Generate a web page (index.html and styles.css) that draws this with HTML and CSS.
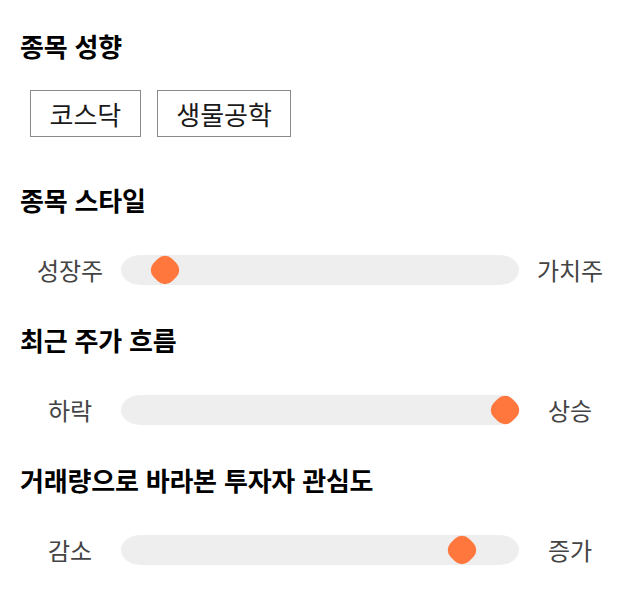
FILE: index.html
```html
<!DOCTYPE html>
<html lang="ko">
<head>
<meta charset="utf-8">
<title>종목 성향</title>
<link rel="stylesheet" href="styles.css">
</head>
<body>
<div class="panel">
  <section class="group">
    <h2 class="title title-tags">종목 성향</h2>
    <div class="tags">
      <span class="tag">코스닥</span>
      <span class="tag">생물공학</span>
    </div>
  </section>

  <section class="group group-gap-lg">
    <h2 class="title">종목 스타일</h2>
    <div class="slider-row">
      <span class="label">성장주</span>
      <div class="track"><span class="thumb" style="--v:0.079"></span></div>
      <span class="label">가치주</span>
    </div>
  </section>

  <section class="group">
    <h2 class="title">최근 주가 흐름</h2>
    <div class="slider-row">
      <span class="label">하락</span>
      <div class="track"><span class="thumb" style="--v:1"></span></div>
      <span class="label">상승</span>
    </div>
  </section>

  <section class="group">
    <h2 class="title">거래량으로 바라본 투자자 관심도</h2>
    <div class="slider-row">
      <span class="label">감소</span>
      <div class="track"><span class="thumb" style="--v:0.885"></span></div>
      <span class="label">증가</span>
    </div>
  </section>
</div>
</body>
</html>
```

FILE: styles.css
```css
* { box-sizing: border-box; }

html, body {
  margin: 0;
  padding: 0;
  background: #ffffff;
}

body {
  font-family: "Noto Sans CJK KR", "Noto Sans", sans-serif;
  color: #111111;
}

.panel {
  padding: 29px 0 0 0;
  display: flex;
  flex-direction: column;
}

.group {
  display: flex;
  flex-direction: column;
  margin-top: 38px;
}

.group:first-child {
  margin-top: 0;
}

.group-gap-lg {
  margin-top: 46px;
}

.title {
  margin: 0 0 38px 0;
  padding-left: 20px;
  font-size: 26px;
  line-height: 34px;
  font-weight: 700;
  color: #000000;
  letter-spacing: -0.2px;
}

.title-tags {
  margin-bottom: 27px;
}

.tags {
  display: flex;
  gap: 16px;
  padding-left: 30px;
}

.tag {
  display: inline-block;
  height: 47px;
  line-height: 45px;
  padding: 0 18.5px;
  border: 1px solid #8a8a8a;
  font-size: 26px;
  color: #1a1a1a;
}

.slider-row {
  display: flex;
  align-items: center;
  gap: 11px;
  padding: 0 30px;
  height: 30px;
}

.label {
  width: 80px;
  flex: 0 0 80px;
  text-align: center;
  font-size: 24px;
  line-height: 30px;
  color: #444444;
}

.track {
  position: relative;
  flex: 1 1 auto;
  height: 30px;
  background: #eeeeee;
  border-radius: 19px / 15px;
}

.thumb {
  position: absolute;
  top: 0.5px;
  left: calc(var(--v) * (100% - 29px));
  width: 29px;
  height: 29px;
  display: flex;
  align-items: center;
  justify-content: center;
}

.thumb::before {
  content: "";
  width: 26px;
  height: 26px;
  flex: 0 0 26px;
  background: #ff773d;
  border-radius: 10px;
  transform: rotate(45deg);
}
```
